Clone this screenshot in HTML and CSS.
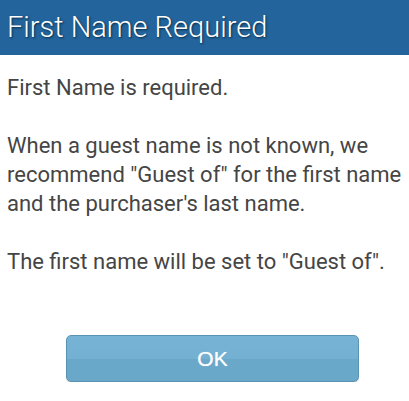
FILE: index.html
```html
<!DOCTYPE html>
<html>
<head>
<meta charset="utf-8">
<link rel="stylesheet" href="styles.css">
</head>
<body>
<div class="dialog">
  <div class="header">First Name Required</div>
  <div class="content">
    <p>First Name is required.</p>
    <p>When a guest name is not known, we recommend "Guest of" for the first name and the purchaser's last name.</p>
    <p>The first name will be set to "Guest of".</p>
  </div>
  <div class="footer">
    <button class="ok">OK</button>
  </div>
</div>
</body>
</html>
```
FILE: styles.css
```css
html, body {
  margin: 0;
  padding: 0;
  background: #ffffff;
}
.dialog {
  width: 409px;
  font-family: Roboto, "Noto Sans", sans-serif;
}
.header {
  height: 55px;
  box-sizing: border-box;
  background: #22649b;
  color: #ffffff;
  font-size: 29px;
  font-weight: 300;
  line-height: 55px;
  padding-left: 7px;
  text-shadow: 1px 1px 2px #0a2c4a;
}
.content {
  padding: 18px 7px 0 7px;
  color: #454545;
  font-size: 22px;
  font-weight: 400;
  line-height: 29px;
}
.content p {
  margin: 0 0 29px 0;
}
.footer {
  display: flex;
  justify-content: center;
  padding-left: 16px;
  padding-top: 30px;
}
.ok {
  width: 293px;
  height: 47px;
  border: 1px solid #5b93b4;
  border-radius: 5px;
  background: linear-gradient(#76b3d4 0%, #73b0d1 50%, #6aa8ca 52%, #6aa8ca 100%);
  color: #ffffff;
  font-family: "Liberation Sans", Arial, sans-serif;
  font-size: 21px;
  text-shadow: 0 0 1px rgba(255,255,255,0.6);
  box-shadow: 0 1px 1px rgba(0,0,0,0.15);
  padding: 0;
}
```
